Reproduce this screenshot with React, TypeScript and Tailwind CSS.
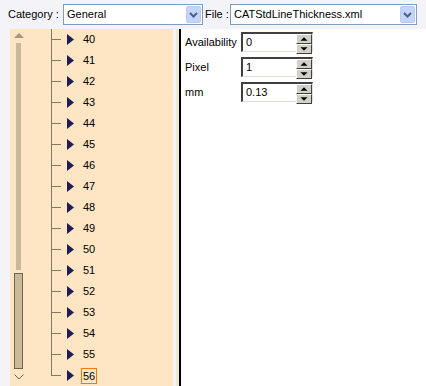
import React from "react";

const rows = [40, 41, 42, 43, 44, 45, 46, 47, 48, 49, 50, 51, 52, 53, 54, 55, 56];

const Chevron = () => (
  <svg width="9" height="6" viewBox="0 0 9 6">
    <path d="M1 1 L4.5 4.5 L8 1" stroke="#4d6185" strokeWidth="2" fill="none" />
  </svg>
);

const Combo = ({ value, width }: { value: string; width: string }) => (
  <div className={`flex h-[21px] items-center border border-[#7f9db9] bg-white pl-[3px] pr-[1px] ${width}`}>
    <span className="flex-1 truncate">{value}</span>
    <div className="flex h-[17px] w-[15px] items-center justify-center rounded-[2px] border border-[#b9c9f3] bg-[#c4d4fb]">
      <Chevron />
    </div>
  </div>
);

const Spinner = ({ value }: { value: string }) => (
  <div className="flex h-[20px] w-[72px] border-t-2 border-l-2 border-b border-r border-t-[#404040] border-l-[#404040] border-b-[#e0ded8] border-r-[#e0ded8] bg-white">
    <span className="flex-1 pl-[3px] leading-[17px]">{value}</span>
    <div className="flex w-[16px] flex-col">
      {["M4 6 L8 2 L12 6 Z", "M4 2 L8 6 L12 2 Z"].map((d, i) => (
        <div
          key={i}
          className="flex flex-1 items-center justify-center border-t border-l border-b border-r border-t-white border-l-white border-b-[#404040] border-r-[#404040] bg-[#d4d0c8]"
        >
          <svg width="16" height="8" viewBox="0 0 16 8">
            <path d={d} fill="#000" />
          </svg>
        </div>
      ))}
    </div>
  </div>
);

export default function App() {
  return (
    <div
      className="flex h-[386px] w-[426px] flex-col overflow-hidden bg-[#f4f4f8] text-[11px] text-black"
      style={{ fontFamily: '"Liberation Sans", Arial, sans-serif' }}
    >
      <div className="flex h-[32px] items-center pl-[8px]">
        <span className="w-[55px]">Category :</span>
        <Combo value="General" width="w-[140px]" />
        <span className="ml-[2px] w-[25px]">File :</span>
        <Combo value="CATStdLineThickness.xml" width="w-[187px]" />
      </div>
      <div className="flex flex-1 pl-[10px]">
        <div className="flex w-[163px] bg-[#fee6c4]">
          <div className="flex w-[15px] flex-col items-center pt-[4px] pl-[2px]">
            <svg width="10" height="5" viewBox="0 0 10 5">
              <path d="M0 5 L5 0 L10 5 Z" fill="#a8987a" />
            </svg>
            <div className="mt-[5px] h-[227px] w-[5px] bg-[#c9b999]" />
            <div className="mt-[3px] h-[96px] w-[9px] border border-[#6e6756] bg-[#c9b999]" />
            <svg className="mt-[5px]" width="10" height="6" viewBox="0 0 10 6">
              <path d="M0.5 0.5 L5 5 L9.5 0.5" stroke="#6e6756" strokeWidth="1" fill="none" />
            </svg>
          </div>
          <div className="flex flex-col pl-[26px]">
            {rows.map((n, i) => (
              <div key={n} className="flex h-[21px] items-stretch">
                <div className="flex w-[10px] flex-col">
                  <div className="h-[11px] border-l border-b border-[#807868]" />
                  <div className={`flex-1 ${i < rows.length - 1 ? "border-l border-[#807868]" : ""}`} />
                </div>
                <div className="flex items-center pl-[6px]">
                  <svg width="7" height="11" viewBox="0 0 7 11">
                    <path d="M0 0 L7 5.5 L0 11 Z" fill="#1c1c58" />
                  </svg>
                </div>
                <div className="flex items-center pl-[7px]">
                  <span className={n === 56 ? "border border-[#f07818] px-[1px] leading-[14px]" : "px-[2px]"}>
                    {n}
                  </span>
                </div>
              </div>
            ))}
          </div>
        </div>
        <div className="w-[3px] bg-[#f4f4f8]" />
        <div className="w-[3px] bg-[#ece9d8]" />
        <div className="w-[2px] bg-black" />
        <div className="flex flex-1 flex-col gap-[5px] bg-white pt-[3px] pl-[4px]">
          {[
            ["Availability", "0"],
            ["Pixel", "1"],
            ["mm", "0.13"],
          ].map(([label, value]) => (
            <div key={label} className="flex items-center">
              <span className="w-[56px]">{label}</span>
              <Spinner value={value} />
            </div>
          ))}
        </div>
      </div>
    </div>
  );
}
